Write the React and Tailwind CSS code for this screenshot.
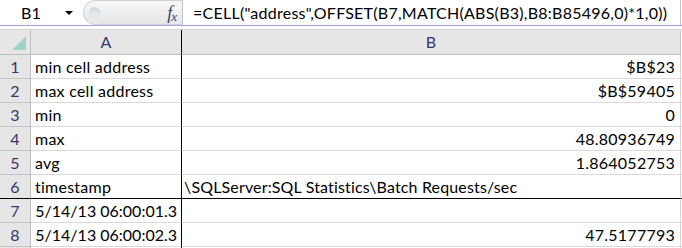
import React from "react";

const rows = [
  { n: 1, a: "min cell address", b: "$B$23", bAlign: "right" },
  { n: 2, a: "max cell address", b: "$B$59405", bAlign: "right" },
  { n: 3, a: "min", b: "0", bAlign: "right" },
  { n: 4, a: "max", b: "48.80936749", bAlign: "right" },
  { n: 5, a: "avg", b: "1.864052753", bAlign: "right" },
  { n: 6, a: "timestamp", b: "\\SQLServer:SQL Statistics\\Batch Requests/sec", bAlign: "left", freeze: true },
  { n: 7, a: "5/14/13 06:00:01.3", aAlign: "right", b: "" },
  { n: 8, a: "5/14/13 06:00:02.3", aAlign: "right", b: "47.5177793", bAlign: "right" },
  { n: "", a: "", b: "" },
];

function FormulaBar() {
  return (
    <div className="flex h-[26px] border-b border-[#a3a3dc] bg-white">
      {/* Name box */}
      <div className="w-[62px] flex items-center justify-center text-black">B1</div>
      <div className="w-[21px] flex items-center justify-start pl-[3px]">
        <div className="w-0 h-0 border-l-[4px] border-r-[4px] border-t-[4px] border-l-transparent border-r-transparent border-t-black" />
      </div>
      {/* Splitter pill */}
      <div className="relative w-[99px] h-[25px] rounded-l-full border border-r-0 border-[#cfcfd6] bg-gradient-to-b from-[#f7f7f7] to-[#e6e6e6] flex items-center">
        <div className="ml-[5px] w-[11px] h-[11px] rounded-full bg-gradient-to-b from-[#cfd6da] to-[#eef1f2] border border-[#d5dade]" />
        <div className="ml-auto mr-[5px] font-['Liberation_Serif'] italic text-[#354766] text-[18px] leading-none flex items-end tracking-normal">
          <span>f</span>
          <span className="text-[13px] -ml-[1px] translate-y-[1px]">x</span>
        </div>
      </div>
      {/* Formula input */}
      <div className="flex-1 border-l border-r border-[#c6c6c6] flex items-center pl-[10px] text-black whitespace-nowrap">
        =CELL("address",OFFSET(B7,MATCH(ABS(B3),B8:B85496,0)*1,0))
      </div>
      <div className="w-[1px]" />
    </div>
  );
}

function HeaderRow() {
  return (
    <div className="flex h-[26px] border-t border-[#d4d4d4]">
      <div className="w-[31px] h-[25px] bg-[#e6e6e6] border-r border-b border-[#bdbdbd] flex items-end justify-end pr-[4px] pb-[4px]">
        <div className="w-0 h-0 border-b-[14px] border-l-[14px] border-b-[#a1d2ce] border-l-transparent" />
      </div>
      <div className="w-[151px] h-[25px] bg-[#e6e6e6] border-r border-r-black border-b border-b-[#bdbdbd] flex items-center justify-center text-[#37376e]">
        A
      </div>
      <div className="w-[499px] h-[25px] bg-[#e6e6e6] border-r border-r-[#c6c6c6] border-b border-b-[#bdbdbd] flex items-center justify-center text-[#37376e]">
        B
      </div>
    </div>
  );
}

function Row({ r }) {
  const bottom = r.freeze ? "border-b-black" : "border-b-[#d9d9d9]";
  const headBottom = r.freeze ? "border-b-black" : "border-b-[#c4c4c4]";
  return (
    <div className="flex h-[24px]">
      <div className={`w-[31px] bg-[#e6e6e6] border-r border-r-[#bdbdbd] border-b ${headBottom} flex items-center justify-center text-[#37376e] pt-[1px]`}>
        {r.n}
      </div>
      <div
        className={`w-[151px] border-r border-r-black border-b ${bottom} flex items-center pt-[1px] whitespace-nowrap ${
          r.aAlign === "right" ? "justify-end pr-[4px] tracking-normal" : "justify-start pl-[4px]"
        }`}
      >
        {r.a}
      </div>
      <div
        className={`w-[499px] border-r border-r-[#d4d4d4] border-b ${bottom} flex items-center pt-[1px] whitespace-nowrap ${
          r.bAlign === "right" ? "justify-end pr-[5px]" : "justify-start pl-[2px] tracking-[0.15px]"
        }`}
      >
        {r.b}
      </div>
      <div className={`w-[1px] border-b ${bottom}`} />
    </div>
  );
}

export default function App() {
  return (
    <div className="w-[682px] h-[248px] overflow-hidden bg-white font-['Lato',sans-serif] text-[16px] tracking-[0.25px] text-black leading-none">
      <FormulaBar />
      <div className="h-[3px]" />
      <HeaderRow />
      {rows.map((r, i) => (
        <Row key={i} r={r} />
      ))}
    </div>
  );
}
